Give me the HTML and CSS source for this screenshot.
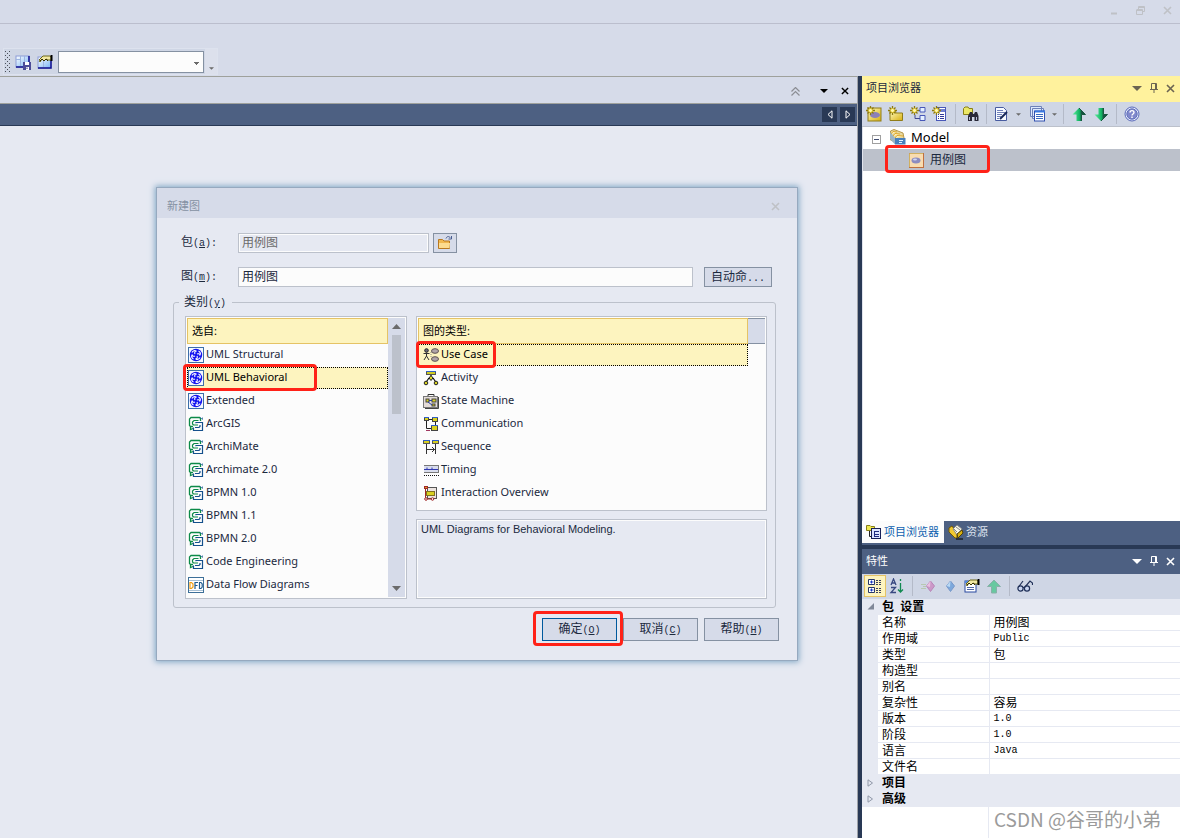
FILE: index.html
```html
<!DOCTYPE html>
<html lang="zh-CN">
<head>
<meta charset="utf-8">
<title>新建图</title>
<link rel="stylesheet" href="styles.css">
</head>
<body>
<svg class="sprite" aria-hidden="true">
  <symbol id="uml" viewBox="0 0 16 16">
    <rect x=".5" y=".5" width="15" height="15" fill="#f4f8ff" stroke="#3d6fa8"/>
    <circle cx="8" cy="8" r="6.200" fill="#1414f0"/>
    <path d="M4 5.500C5 3.500 7 3.200 8 4C6.500 4.500 6.500 6 7 7M10.500 4C12.500 5 12.800 7 12 8C11.500 6.500 10 6.500 9 7M12 10.500C11 12.500 9 12.800 8 12C9.500 11.500 9.500 10 9 9M5.500 12C3.500 11 3.200 9 4 8C4.500 9.500 6 9.500 7 9" fill="none" stroke="#fff" stroke-width="1.100"/>
  </symbol>
  <symbol id="mdg" viewBox="0 0 16 16">
    <path d="M12.500 5V2.500L11.500 1.500H3L1.500 3V9.500L2.500 10.500H5M2.500 10.500V13.500L5 12.500" fill="none" stroke="#0c8a48" stroke-width="1.300"/>
    <path d="M10.500 4.500H6L4.500 6V8L5.500 9H10" fill="none" stroke="#0c8a48" stroke-width="1.200"/>
    <path d="M5.500 11.500V14.500H14.500V6.500H8L7.500 7M7 11.500H11L12 10.500V9" fill="none" stroke="#14508c" stroke-width="1.200"/>
    <path d="M12 1L14.500 3.500V1.500" fill="none" stroke="#5888b0"/>
  </symbol>
  <symbol id="arrow-down" viewBox="0 0 10 5"><path d="M0 0H10L5 5Z" fill="currentColor"/></symbol>
  <symbol id="close" viewBox="0 0 9 9"><path d="M1 1L8 8M8 1L1 8" fill="none" stroke="currentColor" stroke-width="1.600"/></symbol>
  <symbol id="pin" viewBox="0 0 8 10"><path d="M1.500 6V.500H6.500V6M0 6.500H8M4 7V10M5.500 1V6" fill="none" stroke="currentColor"/></symbol>
  <symbol id="spark" viewBox="0 0 9 9">
    <path d="M4.500 0V9M0 4.500H9M1.500 1.500L7.500 7.500M7.500 1.500L1.500 7.500" stroke="#8c7a10" stroke-width="1.300"/>
    <circle cx="4.500" cy="4.500" r="2" fill="#fff9b0" stroke="#e0c020" stroke-width=".8"/>
  </symbol>
  <symbol id="hand" viewBox="0 0 14 8">
    <path d="M0 5L4 1H11L12 2V5L9 5L7 4L5 6L3 4L1 7Z" fill="#f2e9a4" stroke="#6c6818"/>
    <path d="M1 6L3 4L5 6L7 4L9 6" fill="none" stroke="#363000"/><path d="M12.500 0V6" stroke="#000" stroke-width="2"/>
  </symbol>
  <linearGradient id="gold" x1="0" y1="0" x2="1" y2="1"><stop offset="0" stop-color="#fffbc0"/><stop offset="1" stop-color="#d8b010"/></linearGradient>
  <linearGradient id="sky" x1="0" y1="0" x2="1" y2="1"><stop offset="0" stop-color="#fff"/><stop offset="1" stop-color="#78b4f4"/></linearGradient>
  <linearGradient id="leaf" x1="0" y1="0" x2="1" y2="0"><stop offset="0" stop-color="#60f0a0"/><stop offset=".55" stop-color="#10b060"/><stop offset=".7" stop-color="#185040"/></linearGradient>
</svg>

<div class="app">
  <header class="titlebar">
    <button class="plain" aria-label="最小化"><svg width="8" height="9"><path d="M1 7.500H7" stroke="#bfc1c6" stroke-width="2"/></svg></button>
    <button class="plain" aria-label="还原"><svg width="9" height="9"><path d="M.500 4V8.500H6.500V3.500H.500M2.500 3V.500H8.500V5.500H7M2.500 1.500H8.500M.500 4.500H6" fill="none" stroke="#bfc1c6"/></svg></button>
    <button class="plain" aria-label="关闭"><svg width="9" height="9" color="#bfc1c6"><use href="#close"/></svg></button>
  </header>

  <div class="ribbon">
    <div class="toolstrip">
      <span class="grip"></span>
      <button class="tool" aria-label="保存布局"><svg width="16" height="16"><rect x="1" y="2" width="13" height="11" fill="url(#sky)" stroke="#8c9cd8"/><path d="M1 5.500H6M5.500 2V13M9.500 2V8" stroke="#9cb4e0"/><path d="M1 13H14V2" fill="none" stroke="#101090" stroke-width="1.500"/><rect x="8" y="8" width="8" height="8" fill="#4c4c98"/><path d="M10 8H14V11H10ZM11 13H14V16H11Z" fill="#fff"/><path d="M12 13.500V15" stroke="#34347c"/></svg></button>
      <button class="tool" aria-label="布局属性"><svg width="16" height="16"><rect x="1" y="3" width="13" height="11" fill="url(#sky)" stroke="#8c9cd8"/><path d="M6.500 7V14M1 7.500H4" stroke="#9cb4e0"/><path d="M1 14H14V6" fill="none" stroke="#101090" stroke-width="1.500"/><svg x="2" y="1" width="14" height="8"><use href="#hand"/></svg></svg></button>
      <select class="combo" aria-label="布局"><option></option></select>
      <button class="overflow" aria-label="工具栏选项"><svg width="5" height="3" color="#6b6b6b"><use href="#arrow-down"/></svg></button>
    </div>
  </div>

  <div class="workspace">
    <main class="canvas">
      <div class="docbar">
        <button class="plain" aria-label="折叠"><svg width="9" height="9"><path d="M.500 4.500L4.500 .500L8.500 4.500M.500 8.500L4.500 4.500L8.500 8.500" fill="none" stroke="#8c8e94" stroke-width="1.200"/></svg></button>
        <button class="plain" aria-label="文档列表"><svg width="8" height="4" color="#000"><use href="#arrow-down"/></svg></button>
        <button class="plain" aria-label="关闭文档"><svg width="8" height="8" color="#000"><use href="#close"/></svg></button>
      </div>
      <div class="doctabs">
        <button class="scroller" aria-label="向左"><svg width="6" height="9"><path d="M5 .800V8.200L1 4.500Z" fill="none" stroke="#fff"/></svg></button>
        <button class="scroller" aria-label="向右"><svg width="6" height="9"><path d="M1 .800V8.200L5 4.500Z" fill="none" stroke="#fff"/></svg></button>
      </div>
    </main>

    <aside class="side">
      <section class="browser">
        <header class="panel-head active">
          <h2>项目浏览器</h2>
          <button class="plain" aria-label="菜单"><svg width="10" height="5"><use href="#arrow-down"/></svg></button>
          <button class="plain" aria-label="固定"><svg width="8" height="10"><use href="#pin"/></svg></button>
          <button class="plain" aria-label="关闭面板"><svg width="9" height="9"><use href="#close"/></svg></button>
        </header>
        <div class="panel-tools">
          <button class="tool" aria-label="新建模型"><svg width="16" height="16"><rect x="2" y="2" width="13" height="13" fill="url(#gold)" stroke="#907c18"/><ellipse cx="9" cy="9" rx="5" ry="3" fill="#8c80b8"/><svg width="9" height="9"><use href="#spark"/></svg></svg></button>
          <button class="tool" aria-label="新建包"><svg width="16" height="16"><path d="M2 14.500V5H7L8 7H14.500V14.500Z" fill="url(#gold)" stroke="#907c18"/><svg width="9" height="9"><use href="#spark"/></svg></svg></button>
          <button class="tool" aria-label="新建图"><svg width="16" height="16"><path d="M5 9V12.500H10M6 4.500H10" fill="none" stroke="#404890"/><path d="M10 1.500H15V6H10ZM10 9.500H15V14.500H10Z" fill="#e4f0ff" stroke="#4858b8"/><svg width="9" height="9"><use href="#spark"/></svg></svg></button>
          <button class="tool" aria-label="新建元素"><svg width="16" height="16"><rect x="4.500" y="1.500" width="9" height="13" fill="#fff" stroke="#4858b8"/><path d="M5 4.500H13" stroke="#7080d0" stroke-width="3"/><path d="M6 8.500H7M8 8.500H12M6 10.500H7M8 10.500H12M6 12.500H7M8 12.500H12" stroke="#303898"/><svg width="9" height="9"><use href="#spark"/></svg></svg></button>
          <span class="sep"></span>
          <button class="tool" aria-label="查找"><svg width="16" height="16"><path d="M.500 8.500V2.500L2 1H5L6 2.500H9.500V8.500Z" fill="#ece868" stroke="#888018"/><path d="M5 15V10L7 6H9L10 8H11L12 6H14L15.500 10V15H11.500V11H9V15Z" fill="#282838"/><path d="M6.500 11V14M13.500 11V14" stroke="#b8c0d8"/></svg></button>
          <span class="sep"></span>
          <div class="split">
            <button class="tool" aria-label="文档"><svg width="16" height="16"><path d="M1.500 1.500H9.500L12.500 4.500V14.500H1.500Z" fill="#f8fbff" stroke="#485ca0"/><path d="M3 4.500H9M3 6.500H11M3 8.500H8M3 10.500H7M3 12.500H5" stroke="#7080b8"/><path d="M13 6L6 13" stroke="#182858" stroke-width="2"/></svg></button>
            <button class="drop" aria-label="文档选项"><svg width="5" height="3"><use href="#arrow-down"/></svg></button>
          </div>
          <div class="split">
            <button class="tool" aria-label="视图"><svg width="16" height="16"><path d="M.500 .500H11.500V10.500H.500ZM2.500 2.500H13.500V12.500H2.500Z" fill="#dce8fc" stroke="#6c80b8"/><rect x="4.500" y="5" width="10" height="10" fill="#fff" stroke="#3050b0"/><path d="M5 5.500H15" stroke="#3878e0" stroke-width="2"/><path d="M6 8.500H13M6 10.500H13M6 12.500H13" stroke="#3868c0"/></svg></button>
            <button class="drop" aria-label="视图选项"><svg width="5" height="3"><use href="#arrow-down"/></svg></button>
          </div>
          <span class="sep"></span>
          <button class="tool" aria-label="上移"><svg width="14" height="15"><path d="M7 1L13.500 7.500H9.500V14H4.500V7.500H.500Z" fill="url(#leaf)"/><path d="M7 1L13.500 7.500H9.500V14" fill="none" stroke="#185840"/></svg></button>
          <button class="tool" aria-label="下移"><svg width="14" height="15"><path d="M7 14L.500 7.500H4.500V1H9.500V7.500H13.500Z" fill="url(#leaf)"/><path d="M9.500 1V7.500H13.500L7 14" fill="none" stroke="#185840"/></svg></button>
          <span class="sep"></span>
          <button class="tool" aria-label="帮助"><svg width="16" height="16"><circle cx="8" cy="8" r="7" fill="#e8ecff" stroke="#5868b8"/><circle cx="8" cy="8" r="5.200" fill="#8088cc" stroke="#6070b8"/><path d="M6 6.500C6 4 10 4 10 6.500C10 8 8 8 8 9.500M8 10.500V12" fill="none" stroke="#fff" stroke-width="1.400"/></svg></button>
        </div>
        <ul class="tree" role="tree">
          <li class="node" role="treeitem">
            <svg class="expander" width="9" height="9"><rect x=".5" y=".5" width="8" height="8" fill="#fff" stroke="#a0a0a0"/><path d="M2 4.500H7" stroke="#404c70"/></svg>
            <svg width="16" height="16"><path d="M.500 11V2L4 .500L13 4L14 9L8 14Z" fill="#e8d8a0" stroke="#b89848"/><path d="M1 5L3 2.500L7 3M3 7L5 4.500L10 5M5 9L7 6.500L13 7" fill="#fff4c0" stroke="#e0a828"/><path d="M0 3L5 9V15.500L0 10Z" fill="#9cb4c4"/><path d="M5 9H15.500V15.500H5Z" fill="#4880bc"/><path d="M9 11.500H13M9 13.500H12" stroke="#e0f0ff"/></svg>
            <span class="model">Model</span>
          </li>
          <li class="node child" role="treeitem" aria-selected="true">
            <svg width="15" height="15"><rect x=".5" y=".5" width="14" height="14" fill="#f8dcb0" stroke="#c07040"/><path d="M.500 14V.500H14" fill="none" stroke="#d0b060"/><ellipse cx="7" cy="7.500" rx="4.500" ry="3" fill="#8c8cc0"/><ellipse cx="6" cy="6.500" rx="2" ry="1" fill="#d0d8f0"/></svg>
            <span>用例图</span>
            <i class="mark mark-node"></i>
          </li>
        </ul>
        <nav class="panel-tabs">
          <button class="tab current"><svg width="16" height="16"><path d="M.500 6.500V1.500H4L5 2.500H8.500V6.500Z" fill="#f0e850" stroke="#888018"/><path d="M3.500 7V12.500H6" fill="none" stroke="#202020"/><rect x="5.500" y="4.500" width="9" height="10" fill="#dce4ff" stroke="#182058"/><path d="M8 7.500H13M8 10.500H13M8 12.500H13M8.500 7V13" stroke="#202c80"/></svg>项目浏览器</button>
          <button class="tab"><svg width="16" height="16"><path d="M1 4L4 2L9 9V14L7 14L1 8Z" fill="#f0c830" stroke="#705808"/><path d="M5 5L9 1L14 5L9 11Z" fill="#f8f8e8" stroke="#888"/><path d="M6 5L9 8M8 3L12 6" stroke="#888"/><path d="M9 10L14 6L15 9L10 14Z" fill="#d8b010" stroke="#504008"/><path d="M8 15H15" stroke="#000"/></svg>资源</button>
        </nav>
      </section>

      <section class="props">
        <header class="panel-head">
          <h2>特性</h2>
          <button class="plain" aria-label="特性菜单"><svg width="10" height="5"><use href="#arrow-down"/></svg></button>
          <button class="plain" aria-label="固定特性"><svg width="8" height="10"><use href="#pin"/></svg></button>
          <button class="plain" aria-label="关闭特性"><svg width="9" height="9"><use href="#close"/></svg></button>
        </header>
        <div class="panel-tools">
          <button class="tool pressed" aria-label="分类"><svg width="16" height="16"><path d="M1.500 1.500H7.500V6.500H1.500ZM1.500 9.500H7.500V14.500H1.500Z" fill="#fff" stroke="#283868"/><path d="M3 4H6.500M4.500 2.500V5.500M3 12H6.500M4.500 10.500V13.500" stroke="#1838c0"/><path d="M9 2.500H14M9 4.500H14M9 6.500H14M9 10.500H14M9 12.500H14M9 14.500H14" stroke="#384060" stroke-dasharray="2 1"/></svg></button>
          <button class="tool" aria-label="按字母排序"><svg width="16" height="16"><path d="M2 7L4.500 1L7 7M3 5H6M2 9.500H6.500L2 14.500H7" fill="none" stroke="#384880" stroke-width="1.300"/><path d="M11.500 1V3M11.500 5V14M9 11.500L11.500 14L14 11.500" fill="none" stroke="#108850" stroke-width="1.300"/></svg></button>
          <span class="sep"></span>
          <button class="tool" aria-label="后退"><svg width="16" height="16"><path d="M1 6.500H6M3 8.500H6M1 10.500H6" stroke="#b8c8b0"/><path d="M10.500 3L14.500 8L10.500 13.500L6.500 8Z" fill="#cc98c8" stroke="#b888b8"/><path d="M10.500 3L6.500 8L10 9Z" fill="#e8c0e0"/></svg></button>
          <button class="tool" aria-label="前进"><svg width="16" height="16"><path d="M8.500 3L12.500 8L8.500 13.500L4.500 8Z" fill="#7ca8dc" stroke="#7898c8"/><path d="M8.500 3L4.500 8L8 9Z" fill="#b8d8f4"/></svg></button>
          <button class="tool" aria-label="属性页"><svg width="16" height="16"><rect x="1" y="3" width="11" height="11" fill="#fff" stroke="#2848a0"/><path d="M1 4H12" stroke="#5088e0" stroke-width="2"/><path d="M3 9.500H10M3 11.500H10" stroke="#5068a8"/><svg x="2" y="1" width="14" height="8"><use href="#hand"/></svg></svg></button>
          <button class="tool" aria-label="上级"><svg width="14" height="15"><path d="M7 1L13.500 7.500H9.500V14H4.500V7.500H.500Z" fill="#68c8a0" stroke="#88b0a8"/></svg></button>
          <span class="sep"></span>
          <button class="tool" aria-label="查看"><svg width="16" height="16"><circle cx="3.500" cy="10.500" r="2.600" fill="#c8d4f0" stroke="#203058" stroke-width="1.200"/><circle cx="10" cy="10.500" r="2.600" fill="#c8d4f0" stroke="#203058" stroke-width="1.200"/><path d="M1.500 9L6 3M8 9L13 3L15.500 5V7M6 9.500H7.500" fill="none" stroke="#203058" stroke-width="1.200"/></svg></button>
        </div>
        <table class="grid">
          <colgroup><col class="col-gutter"><col class="col-name"><col></colgroup>
          <tbody>
            <tr class="group"><td><svg width="7" height="7"><path d="M7 0V6.500H.500Z" fill="#808898"/></svg></td><th colspan="2">包&nbsp; 设置</th></tr>
            <tr><td></td><th>名称</th><td>用例图</td></tr>
            <tr><td></td><th>作用域</th><td class="latin">Public</td></tr>
            <tr><td></td><th>类型</th><td>包</td></tr>
            <tr><td></td><th>构造型</th><td></td></tr>
            <tr><td></td><th>别名</th><td></td></tr>
            <tr><td></td><th>复杂性</th><td>容易</td></tr>
            <tr><td></td><th>版本</th><td class="latin">1.0</td></tr>
            <tr><td></td><th>阶段</th><td class="latin">1.0</td></tr>
            <tr><td></td><th>语言</th><td class="latin">Java</td></tr>
            <tr><td></td><th>文件名</th><td></td></tr>
            <tr class="group"><td><svg width="7" height="8"><path d="M1 .800V7.200L5.500 4Z" fill="none" stroke="#9098a8"/></svg></td><th colspan="2">项目</th></tr>
            <tr class="group"><td><svg width="7" height="8"><path d="M1 .800V7.200L5.500 4Z" fill="none" stroke="#9098a8"/></svg></td><th colspan="2">高级</th></tr>
          </tbody>
        </table>
        <div class="grid-rest"><span class="watermark">CSDN @谷哥的小弟</span></div>
      </section>
    </aside>
  </div>
</div>

<form class="dialog" role="dialog" aria-labelledby="dialog-title">
  <header class="dialog-head">
    <h1 id="dialog-title">新建图</h1>
    <button type="button" class="plain" aria-label="关闭对话框"><svg width="9" height="9" color="#bfc1c6"><use href="#close"/></svg></button>
  </header>
  <div class="dialog-body">
    <div class="field">
      <label for="pkg">包<span class="latin">(<u>a</u>):</span></label>
      <input id="pkg" class="short" type="text" value="用例图" disabled>
      <button type="button" class="btn browse" aria-label="选择包"><svg width="16" height="16"><path d="M1.500 13.500V4.500H5.500L7 6H12.500V13.500Z" fill="#f0b850" stroke="#b87820"/><path d="M2 8H13L12.500 13H2Z" fill="#fcdc90"/><path d="M9 3.500C10 1 12 1 13.500 3M14.500 1V4H11.500" fill="none" stroke="#485c90"/></svg></button>
    </div>
    <div class="field">
      <label for="name">图<span class="latin">(<u>m</u>):</span></label>
      <input id="name" type="text" value="用例图">
      <button type="button" class="btn auto">自动命<span class="latin">...</span></button>
    </div>

    <fieldset>
      <legend>类别<span class="latin">(<u>y</u>)</span></legend>
      <div class="columns">
        <div class="list from">
          <div class="items">
            <div class="list-head">选自:</div>
            <ul role="listbox" aria-label="选自">
              <li role="option"><svg width="16" height="16"><use href="#uml"/></svg>UML Structural</li>
              <li role="option" aria-selected="true"><svg width="16" height="16"><use href="#uml"/></svg>UML Behavioral<i class="mark mark-from"></i></li>
              <li role="option"><svg width="16" height="16"><use href="#uml"/></svg>Extended</li>
              <li role="option"><svg width="16" height="16"><use href="#mdg"/></svg>ArcGIS</li>
              <li role="option"><svg width="16" height="16"><use href="#mdg"/></svg>ArchiMate</li>
              <li role="option"><svg width="16" height="16"><use href="#mdg"/></svg>Archimate 2.0</li>
              <li role="option"><svg width="16" height="16"><use href="#mdg"/></svg>BPMN 1.0</li>
              <li role="option"><svg width="16" height="16"><use href="#mdg"/></svg>BPMN 1.1</li>
              <li role="option"><svg width="16" height="16"><use href="#mdg"/></svg>BPMN 2.0</li>
              <li role="option"><svg width="16" height="16"><use href="#mdg"/></svg>Code Engineering</li>
              <li role="option"><svg width="16" height="16"><rect x=".5" y=".5" width="15" height="15" fill="#fff" stroke="#3d6f98"/><path d="M1 3.500H15M1 13.500H15" stroke="#a8c0d4"/><path d="M2 5.500V11.500H3.500L5 10V7L3.500 5.500Z" fill="none" stroke="#f09c10" stroke-width="1.200"/><path d="M7 12V5.500H10M7 8.500H9.500M11.500 5.500V11.500H13L14.200 10V7L13 5.500Z" fill="none" stroke="#205c90" stroke-width="1.200"/></svg>Data Flow Diagrams</li>
            </ul>
          </div>
          <div class="scrollbar">
            <svg width="9" height="5"><path d="M0 5H9L4.500 0Z" fill="#6b6b6b"/></svg>
            <span class="thumb"></span>
            <svg width="9" height="5"><path d="M0 0H9L4.500 5Z" fill="#6b6b6b"/></svg>
          </div>
        </div>
        <div class="right">
          <div class="list types">
            <div class="items">
              <div class="list-head">图的类型:</div>
              <ul role="listbox" aria-label="图的类型">
                <li role="option" aria-selected="true"><svg width="16" height="16"><circle cx="3.500" cy="3.500" r="1.800" fill="#667" stroke="#222"/><path d="M3.500 5.500V9M.500 6.500H6.500M3.500 9L1 13M3.500 9L6 13" fill="none" stroke="#333"/><ellipse cx="12" cy="4" rx="3.500" ry="2.300" fill="#b0a4a8" stroke="#5c5050"/><ellipse cx="12" cy="12" rx="3.500" ry="2.300" fill="#b0a4a8" stroke="#5c5050"/><path d="M8 5V11" stroke="#888" stroke-dasharray="1 1"/></svg>Use Case<i class="mark mark-type"></i></li>
                <li role="option"><svg width="16" height="16"><path d="M8 4V6M6 8L2.500 13M10 8L13.500 13M5 8.500H11" fill="none" stroke="#111" stroke-width="1.200"/><rect x="3.500" y="1.500" width="9" height="3" fill="#d0cc20" stroke="#555"/><path d="M3 1.500H13" stroke="#3060c8"/><path d="M8 5.500L10 8L8 10.500L6 8Z" fill="#e0d820" stroke="#222"/><circle cx="3" cy="13" r="1.800" fill="#d8d020" stroke="#222"/><circle cx="13" cy="13" r="1.800" fill="#d8d020" stroke="#222"/></svg>Activity</li>
                <li role="option"><svg width="16" height="16"><path d="M5 3V1.500H11V3" fill="none" stroke="#333"/><rect x=".500" y="3.500" width="14" height="11" fill="#e4dcd8" stroke="#777"/><path d="M15.500 4V15.500H2" fill="none" stroke="#444"/><rect x="3" y="6" width="3" height="3" fill="#d8d020" stroke="#444"/><rect x="9" y="6" width="4" height="3" fill="#d8d020" stroke="#444"/><rect x="9" y="11" width="3" height="2" fill="#d8d020" stroke="#444"/><path d="M6 7.500H9M5 9L9 12" stroke="#2840a0"/></svg>State Machine</li>
                <li role="option"><svg width="16" height="16"><path d="M3.500 5V12.500H8M6 3.500H9M12.500 6V9" fill="none" stroke="#222"/><path d="M3 14.500H7" stroke="#a03860"/><rect x="1.500" y="1.500" width="4" height="3" fill="#d8d020" stroke="#444"/><rect x="9.500" y="1.500" width="5" height="4" fill="#d8d020" stroke="#444"/><rect x="8.500" y="9.500" width="6" height="5" fill="#d8d020" stroke="#444"/><path d="M1 1.500H6M9 1.500H15M8 9.500H15" stroke="#3060c8"/></svg>Communication</li>
                <li role="option"><svg width="16" height="16"><path d="M3.500 5V15M12.500 5V15M4 10.500H12M9 8L11.500 10.500L9 13" fill="none" stroke="#333"/><rect x=".500" y="1.500" width="6" height="3" fill="#d8d020" stroke="#555"/><rect x="9.500" y="1.500" width="6" height="3" fill="#d8d020" stroke="#555"/><path d="M0 1.500H7M9 1.500H16" stroke="#3060c8"/></svg>Sequence</li>
                <li role="option"><svg width="16" height="16"><rect x="1" y="3" width="15" height="8" fill="#d8dcec"/><path d="M1 3.500H16M15.500 3V11M1 10.500H16" stroke="#777"/><path d="M1 7.500H4V5.500M4 7.500H9V5.500M9 7.500H15" fill="none" stroke="#3038b0"/><path d="M1 13.500H16" stroke="#111" stroke-dasharray="1 1"/></svg>Timing</li>
                <li role="option"><svg width="16" height="16"><rect x="4.500" y="2.500" width="9" height="11" fill="#ece4e0" stroke="#555"/><path d="M2.500 3V14H11" fill="none" stroke="#a02828"/><rect x="1.500" y="1.500" width="3" height="2" fill="#d8a020" stroke="#a02828"/><rect x="3.500" y="6.500" width="8" height="4" fill="#d8d020" stroke="#807020"/><circle cx="3" cy="14" r="1.300" fill="#fff" stroke="#a02828"/><circle cx="9.500" cy="14" r="1.300" fill="#fff" stroke="#a02828"/></svg>Interaction Overview</li>
              </ul>
            </div>
            <div class="head-cap"></div>
          </div>
          <div class="about">UML Diagrams for Behavioral Modeling.</div>
        </div>
      </div>
    </fieldset>

    <footer class="actions">
      <button type="button" class="btn primary">确定<span class="latin">(<u>O</u>)</span><i class="mark mark-ok"></i></button>
      <button type="button" class="btn">取消<span class="latin">(<u>C</u>)</span></button>
      <button type="button" class="btn">帮助<span class="latin">(<u>H</u>)</span></button>
    </footer>
  </div>
</form>
</body>
</html>
```
FILE: styles.css
```css
* { box-sizing: border-box; }

body {
  margin: 0;
  font: 12px/16px "Noto Sans", "Noto Sans CJK SC", sans-serif;
  color: #1b293e;
  background: #d6dbe9;
}

h1, h2, ul { margin: 0; padding: 0; font-weight: normal; }
ul { list-style: none; }
button, input, select { margin: 0; font: inherit; color: inherit; }
svg { flex: none; display: block; }
.sprite { position: absolute; width: 0; height: 0; }

.latin { font-family: "Liberation Mono", monospace; font-size: 10px; }

.plain, .tool, .drop, .overflow, .scroller {
  display: flex;
  align-items: center;
  justify-content: center;
  padding: 0;
  border: 0;
  background: none;
}

.app { display: flex; flex-direction: column; height: 100vh; }

.titlebar {
  display: flex;
  justify-content: flex-end;
  align-items: center;
  gap: 18px;
  height: 24px;
  padding: 0 8px 3px;
  border-bottom: 1px solid #bbbecd;
}

.ribbon { height: 52px; padding: 24px 0 0 3px; }

.toolstrip {
  display: flex;
  align-items: center;
  width: 215px;
  height: 27px;
  border: 1px solid #dde2ee;
  background: #cfd6e5;
}

.grip {
  width: 6px;
  height: 22px;
  margin: 0 1px;
  background: conic-gradient(from 270deg at 1px 1px, #4a4e58 90deg, transparent 0) 0 0 / 4px 4px,
    conic-gradient(from 270deg at 1px 1px, #4a4e58 90deg, transparent 0) 2px 2px / 4px 4px;
}

.tool { width: 22px; height: 22px; }

.combo {
  width: 146px;
  height: 22px;
  margin-left: 2px;
  padding: 0 16px 0 4px;
  border: 1px solid #8591a2;
  border-radius: 0;
  appearance: none;
  background: linear-gradient(#6b6b6b, #6b6b6b) 135px 10px / 5px 1px no-repeat,
    linear-gradient(#6b6b6b, #6b6b6b) 136px 11px / 3px 1px no-repeat,
    linear-gradient(#6b6b6b, #6b6b6b) 137px 12px / 1px 1px no-repeat, #fcfcfc;
}

.overflow { width: 12px; height: 25px; margin-left: 1px; padding-top: 13px; background: #dce0ec; }

.workspace { display: flex; flex: 1; min-height: 0; background: #293955; }
.canvas {
  flex: 1;
  border-right: 1px solid #a0a3a8;
  background: #e6e9f2;
}

.docbar {
  display: flex;
  justify-content: flex-end;
  align-items: center;
  height: 28px;
  padding: 2px 8px 0 0;
  gap: 13px;
  border: solid #9fa19c;
  border-width: 1px 0;
  background: #d6dbe9;
}
.docbar .plain:first-child { margin-right: 7px; }

.doctabs {
  display: flex;
  justify-content: flex-end;
  align-items: center;
  gap: 3px;
  height: 22px;
  padding-right: 2px;
  border-bottom: 1px solid #293955;
  background: #4d6082;
}
.scroller { width: 15px; height: 15px; background: #293955; }

.side { display: flex; flex-direction: column; width: 318px; margin-left: 4px; }
.browser { display: flex; flex: 1; flex-direction: column; min-height: 0; }

.panel-head {
  display: flex;
  align-items: center;
  gap: 8px;
  height: 25px;
  padding: 0 5px 0 4px;
  color: #fff;
  background: #4d6082;
}
.panel-head.active { height: 26px; padding-bottom: 2px; color: #6b6452; background: #fff29d; }
.panel-head h2 { flex: 1; font-size: 11px; color: #fff; }
.panel-head.active h2 { color: #1b293e; }

.panel-tools {
  display: flex;
  align-items: center;
  height: 25px;
  padding-left: 1px;
  border-bottom: 1px solid #bcc1cb;
  background: #cfd6e5;
}
.props .panel-tools { padding-left: 2px; border-bottom: 0; }
.sep { width: 1px; height: 20px; margin: 0 4px; background: #b4bac8; }
.split { display: flex; align-items: center; }
.split + .split { margin-left: 4px; }
.drop { width: 10px; height: 22px; color: #6b6b6b; }
.pressed { border: 1px solid #e5c365; background: #fdf4bf; }

.tree { flex: 1; background: #fff; border-left: 1px solid #e0e3ec; }
.node { position: relative; display: flex; align-items: center; height: 22px; padding: 0 0 2px 9px; gap: 5px; }
.expander { margin: 4px 4px 0 0; }
.node.child { padding: 0 0 0 46px; gap: 6px; background: #bcc1cb; }
.model { font-size: 13px; color: #000; }

.panel-tabs { display: flex; height: 28px; padding-bottom: 4px; background: linear-gradient(#4d6082 24px, #293955 24px); }
.tab {
  display: flex;
  align-items: center;
  gap: 2px;
  height: 22px;
  padding: 0 5px 0 4px;
  border: 0;
  font-size: 11px;
  color: #dde3f0;
  background: none;
}
.tab.current { color: #0e5fae; background: #fcfcfc; }

.grid { width: 100%; border-collapse: collapse; table-layout: fixed; color: #000; background: #fff; }
.col-gutter { width: 16px; }
.col-name { width: 111px; }
.grid td, .grid th {
  height: 16px;
  padding: 0 0 0 4px;
  border-bottom: 1px solid #e6e9f2;
  line-height: 15px;
  font-weight: normal;
  text-align: left;
  white-space: nowrap;
}
.grid td:first-child { padding: 0 0 0 5px; background: #e6e9f2; }
.grid th { border-right: 1px solid #e6e9f2; }
.grid .group th { font-weight: bold; background: #e6e9f2; }

.grid-rest {
  height: 31px;
  padding-left: 132px;
  background: linear-gradient(#e6e9f2, #e6e9f2) 126px 0 / 1px 100% no-repeat #fff;
}
.watermark { font: 19px/24px "Noto Sans CJK SC", sans-serif; color: #9b9b9b; white-space: nowrap; }

.dialog {
  position: absolute;
  left: 156px;
  top: 187px;
  width: 642px;
  border: 1px solid #96a9bf;
  background: #e6e9f2;
  box-shadow: 0 0 6px 1px #7fa6c4;
}
.dialog-head {
  display: flex;
  align-items: center;
  justify-content: space-between;
  height: 30px;
  padding: 6px 17px 0 10px;
  background: #d6dbe9;
}
.dialog-head h1 { font-size: 11px; color: #8591a2; }
.dialog-body { padding: 15px 18px 19px 16px; }

.field { display: flex; height: 20px; margin: 0 7px 14px 8px; }
.field label { width: 57px; line-height: 18px; }
.field input {
  flex: 1;
  min-width: 0;
  padding: 0 3px;
  border: 1px solid #bcc1cb;
  background: #fcfcfc;
}
.field input.short {
  flex: 0 0 191px;
  color: #6b6b6b;
  background: #e6e9f2;
  box-shadow: inset 0 0 0 1px #fcfcfc;
}

.btn {
  position: relative;
  width: 75px;
  padding: 0;
  border: 1px solid #8591a2;
  background: #d6dbe9;
}
.browse { display: flex; align-items: center; justify-content: center; width: 24px; margin-left: 4px; }
.auto { width: 68px; margin-left: 11px; line-height: 18px; }

fieldset {
  min-width: 0;
  margin: -7px 3px 0 0;
  padding: 0;
  border: 1px solid #bcc1cb;
  border-radius: 3px;
}
legend { height: 16px; margin-left: 5px; padding: 0 6px 0 5px; line-height: 16px; }
.columns { display: flex; gap: 9px; padding: 6px 8px 8px 11px; }

.list { display: flex; padding: 1px; border: 1px solid #bcc1cb; background: #fcfcfc; }
.items { flex: 1; }
.from { width: 222px; }
.right { display: flex; flex: 1; flex-direction: column; gap: 8px; }
.types { height: 195px; }
.list-head {
  height: 26px;
  padding-left: 4px;
  border: 1px solid #e5c365;
  font-size: 11px;
  line-height: 24px;
  color: #000;
  background: #fdf4bf;
}
.list li {
  position: relative;
  display: flex;
  align-items: center;
  gap: 2px;
  height: 22px;
  margin-bottom: 1px;
  padding: 0 0 2px 1px;
  font-size: 11px;
}
.list li svg { margin-top: 2px; }
.types li { padding-left: 5px; }
.list li[aria-selected="true"] { outline: 1px dotted #000; outline-offset: -1px; color: #000; background: #fdf4bf; }
.scrollbar {
  display: flex;
  flex-direction: column;
  align-items: center;
  width: 17px;
  padding: 6px 0;
  background: #d6dbe9;
}
.thumb { width: 9px; height: 79px; margin: 6px 0 auto; background: #bcc1cb; }
.head-cap {
  width: 17px;
  height: 26px;
  border: solid #8591a2;
  border-width: 1px 0;
  background: #d6dbe9;
}
.about {
  flex: 1;
  padding: 1px 4px;
  border: 1px solid #bcc1cb;
  box-shadow: inset 0 0 0 1px #fcfcfc;
  font: 11px/16px "Liberation Sans", sans-serif;
}

.actions { display: flex; justify-content: flex-end; gap: 6px; height: 23px; margin-top: 10px; }
.primary { border-color: #00599d; }

/* Highlight frames laid over the steps to follow */
.mark {
  position: absolute;
  z-index: 1;
  border: 3px solid #ff2218;
  border-radius: 4px;
  pointer-events: none;
}
.mark-node { left: 22px; top: -4px; width: 105px; height: 28px; }
.mark-from { left: -4px; top: -3px; width: 134px; height: 27px; }
.mark-type { left: -2px; top: -3px; width: 80px; height: 27px; }
.mark-ok { left: -10px; top: -8px; width: 90px; height: 35px; }
```
